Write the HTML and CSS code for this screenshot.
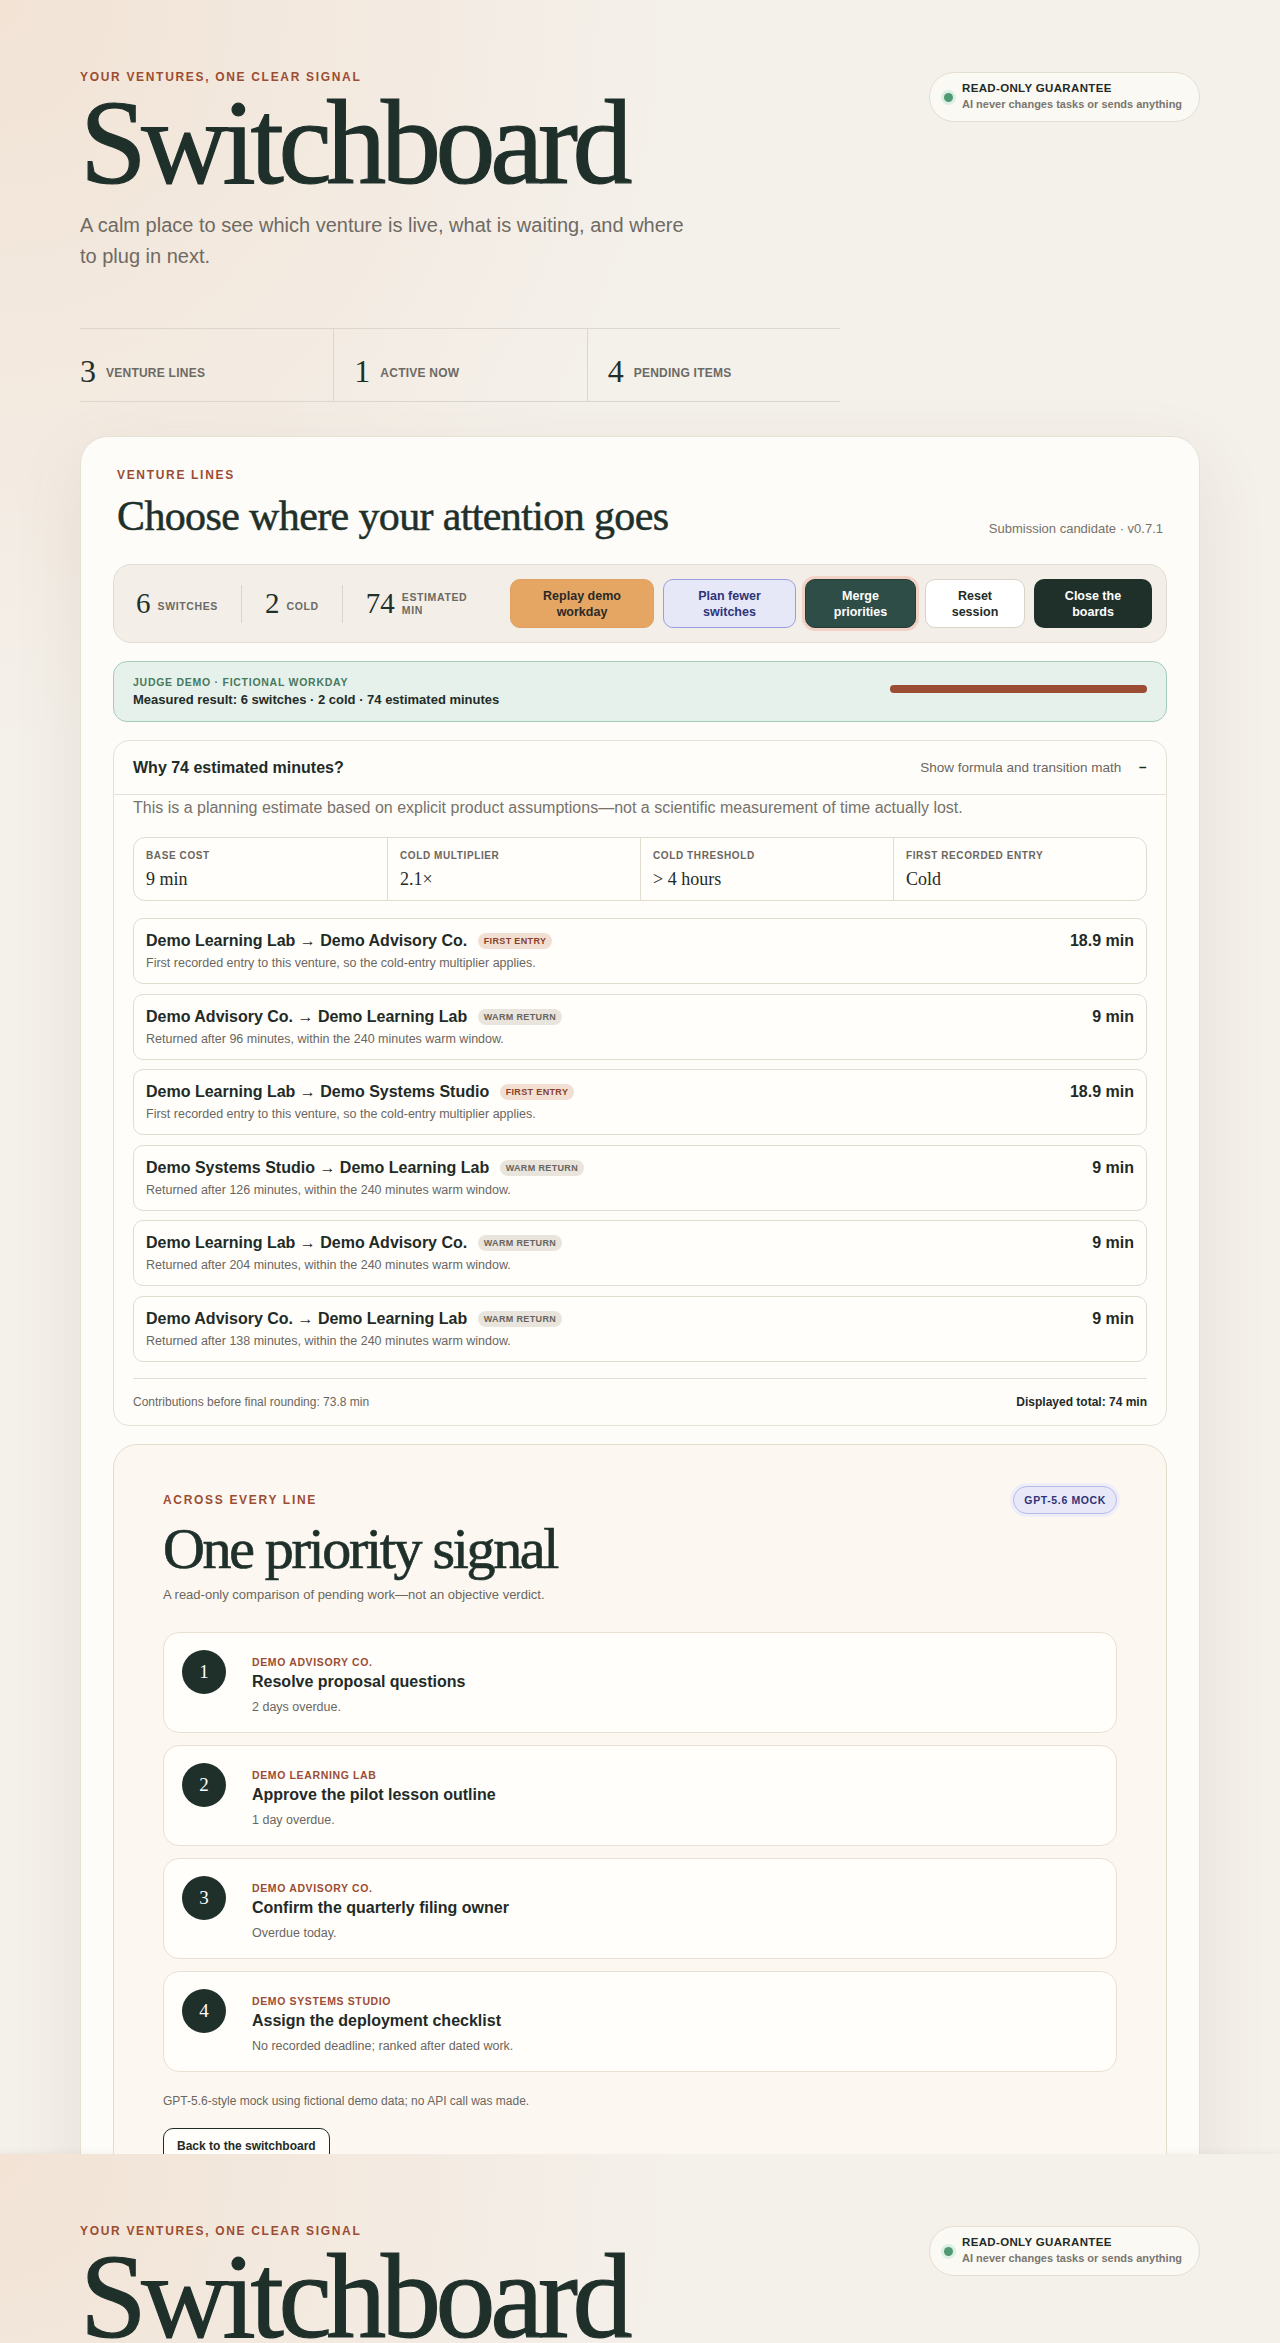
FILE: index.html
```html
<!DOCTYPE html>
<html>
<head>
    <title>Switchboard</title>
    <link rel="stylesheet" href="styles.css">
</head>
<body>
    <div class="frame">
        <div class="page">
            <header class="hero">
                <div class="hero-text">
                    <p class="eyebrow">Your ventures, one clear signal</p>
                    <h1 class="brand">Switchboard</h1>
                    <p class="lede">A calm place to see which venture is live, what is waiting, and where to plug in next.</p>
                    <div class="tally">
                        <div class="tally-item"><span class="tally-num">3</span><span class="tally-label">Venture lines</span></div>
                        <div class="tally-item"><span class="tally-num">1</span><span class="tally-label">Active now</span></div>
                        <div class="tally-item"><span class="tally-num">4</span><span class="tally-label">Pending items</span></div>
                    </div>
                </div>
                <div class="guarantee">
                    <span class="dot"></span>
                    <div>
                        <strong>READ-ONLY GUARANTEE</strong>
                        <span>AI never changes tasks or sends anything</span>
                    </div>
                </div>
            </header>

            <main class="board">
                <section class="lines">
                    <div class="lines-head">
                        <div>
                            <p class="eyebrow">Venture lines</p>
                            <h2 class="section-title">Choose where your attention goes</h2>
                        </div>
                        <span class="version">Submission candidate · v0.7.1</span>
                    </div>

                    <div class="toolbar">
                        <div class="mini-stats">
                            <div class="mini"><span class="mini-num">6</span><span class="mini-label">Switches</span></div>
                            <div class="mini"><span class="mini-num">2</span><span class="mini-label">Cold</span></div>
                            <div class="mini"><span class="mini-num">74</span><span class="mini-label">Estimated min</span></div>
                        </div>
                        <div class="actions">
                            <button class="btn btn-replay">Replay demo<br>workday</button>
                            <button class="btn btn-plan">Plan fewer<br>switches</button>
                            <button class="btn btn-merge">Merge<br>priorities</button>
                            <button class="btn btn-reset">Reset<br>session</button>
                            <button class="btn btn-close">Close the<br>boards</button>
                        </div>
                    </div>

                    <div class="demo-banner">
                        <div>
                            <p class="demo-label">Judge demo · Fictional workday</p>
                            <p class="demo-result">Measured result: 6 switches · 2 cold · 74 estimated minutes</p>
                        </div>
                        <div class="demo-bar"><div class="demo-fill" style="width: 100%"></div></div>
                    </div>

                    <div class="math">
                        <div class="math-head">
                            <h3>Why 74 estimated minutes?</h3>
                            <span class="math-toggle">Show formula and transition math <span class="minus">−</span></span>
                        </div>
                        <div class="math-body">
                            <p class="math-note">This is a planning estimate based on explicit product assumptions—not a scientific measurement of time actually lost.</p>
                            <div class="assumptions">
                                <div class="assumption"><span class="a-label">Base cost</span><span class="a-value">9 min</span></div>
                                <div class="assumption"><span class="a-label">Cold multiplier</span><span class="a-value">2.1×</span></div>
                                <div class="assumption"><span class="a-label">Cold threshold</span><span class="a-value">&gt; 4 hours</span></div>
                                <div class="assumption"><span class="a-label">First recorded entry</span><span class="a-value">Cold</span></div>
                            </div>
                            <div class="transitions">
                                <div class="transition">
                                    <div>
                                        <p class="t-title">Demo Learning Lab → Demo Advisory Co. <span class="tag tag-first">First entry</span></p>
                                        <p class="t-why">First recorded entry to this venture, so the cold-entry multiplier applies.</p>
                                    </div>
                                    <span class="t-cost">18.9 min</span>
                                </div>
                                <div class="transition">
                                    <div>
                                        <p class="t-title">Demo Advisory Co. → Demo Learning Lab <span class="tag tag-warm">Warm return</span></p>
                                        <p class="t-why">Returned after 96 minutes, within the 240 minutes warm window.</p>
                                    </div>
                                    <span class="t-cost">9 min</span>
                                </div>
                                <div class="transition">
                                    <div>
                                        <p class="t-title">Demo Learning Lab → Demo Systems Studio <span class="tag tag-first">First entry</span></p>
                                        <p class="t-why">First recorded entry to this venture, so the cold-entry multiplier applies.</p>
                                    </div>
                                    <span class="t-cost">18.9 min</span>
                                </div>
                                <div class="transition">
                                    <div>
                                        <p class="t-title">Demo Systems Studio → Demo Learning Lab <span class="tag tag-warm">Warm return</span></p>
                                        <p class="t-why">Returned after 126 minutes, within the 240 minutes warm window.</p>
                                    </div>
                                    <span class="t-cost">9 min</span>
                                </div>
                                <div class="transition">
                                    <div>
                                        <p class="t-title">Demo Learning Lab → Demo Advisory Co. <span class="tag tag-warm">Warm return</span></p>
                                        <p class="t-why">Returned after 204 minutes, within the 240 minutes warm window.</p>
                                    </div>
                                    <span class="t-cost">9 min</span>
                                </div>
                                <div class="transition">
                                    <div>
                                        <p class="t-title">Demo Advisory Co. → Demo Learning Lab <span class="tag tag-warm">Warm return</span></p>
                                        <p class="t-why">Returned after 138 minutes, within the 240 minutes warm window.</p>
                                    </div>
                                    <span class="t-cost">9 min</span>
                                </div>
                            </div>
                            <div class="math-foot">
                                <span>Contributions before final rounding: 73.8 min</span>
                                <strong>Displayed total: 74 min</strong>
                            </div>
                        </div>
                    </div>

                    <section class="signal">
                        <div class="signal-head">
                            <div>
                                <p class="eyebrow">Across every line</p>
                                <h2 class="signal-title">One priority signal</h2>
                                <p class="signal-sub">A read-only comparison of pending work—not an objective verdict.</p>
                            </div>
                            <span class="mock-pill">GPT-5.6 MOCK</span>
                        </div>
                        <ol class="priorities">
                            <li class="priority">
                                <span class="rank">1</span>
                                <div class="p-text">
                                    <p class="p-venture">Demo Advisory Co.</p>
                                    <p class="p-task">Resolve proposal questions</p>
                                    <p class="p-why">2 days overdue.</p>
                                </div>
                            </li>
                            <li class="priority">
                                <span class="rank">2</span>
                                <div class="p-text">
                                    <p class="p-venture">Demo Learning Lab</p>
                                    <p class="p-task">Approve the pilot lesson outline</p>
                                    <p class="p-why">1 day overdue.</p>
                                </div>
                            </li>
                            <li class="priority">
                                <span class="rank">3</span>
                                <div class="p-text">
                                    <p class="p-venture">Demo Advisory Co.</p>
                                    <p class="p-task">Confirm the quarterly filing owner</p>
                                    <p class="p-why">Overdue today.</p>
                                </div>
                            </li>
                            <li class="priority">
                                <span class="rank">4</span>
                                <div class="p-text">
                                    <p class="p-venture">Demo Systems Studio</p>
                                    <p class="p-task">Assign the deployment checklist</p>
                                    <p class="p-why">No recorded deadline; ranked after dated work.</p>
                                </div>
                            </li>
                        </ol>
                        <p class="signal-note">GPT-5.6-style mock using fictional demo data; no API call was made.</p>
                        <button class="btn-back">Back to the switchboard</button>
                        <div class="signal-spacer"></div>
                    </section>
                </section>
            </main>
        </div>
    </div>

    <div class="page page-repeat">
        <header class="hero">
            <div class="hero-text">
                <p class="eyebrow">Your ventures, one clear signal</p>
                <h1 class="brand">Switchboard</h1>
            </div>
            <div class="guarantee">
                <span class="dot"></span>
                <div>
                    <strong>READ-ONLY GUARANTEE</strong>
                    <span>AI never changes tasks or sends anything</span>
                </div>
            </div>
        </header>
    </div>
</body>
</html>
```

FILE: styles.css
```css
* {
    box-sizing: border-box;
}

body {
    margin: 0;
    background: #f4f0ea;
    font-family: "Liberation Sans", Arial, sans-serif;
    color: #1f2b27;
}

p,
h1,
h2,
h3,
ol {
    margin: 0;
    padding: 0;
}

.frame {
    height: 2154px;
    overflow: hidden;
}

.page {
    background:
        radial-gradient(900px 1000px at 0 0, #f2e3d5 0%, rgba(244, 240, 234, 0) 75%),
        #f4f0ea;
    padding: 0 80px;
}

.page-repeat {
    height: 189px;
    overflow: hidden;
    box-shadow: 0 -2px 6px rgba(120, 100, 80, 0.06);
}

/* hero */

.hero {
    display: flex;
    justify-content: space-between;
    align-items: flex-start;
    padding-top: 70px;
}

.eyebrow {
    font-size: 12px;
    line-height: 14px;
    font-weight: 700;
    letter-spacing: 0.14em;
    text-transform: uppercase;
    color: #9b4d34;
}

.brand {
    font-family: "Liberation Serif", "Times New Roman", serif;
    font-weight: 400;
    font-size: 120px;
    line-height: 112px;
    letter-spacing: -0.045em;
    color: #1f302b;
    -webkit-text-stroke: 1.2px #1f302b;
    margin-top: 3px;
}

.lede {
    max-width: 615px;
    margin-top: 11px;
    font-size: 20px;
    line-height: 31px;
    color: #6f6a63;
}

.tally {
    display: grid;
    grid-template-columns: repeat(3, 1fr);
    width: 760px;
    margin-top: 56px;
    border-top: 1px solid #ddd6cc;
    border-bottom: 1px solid #ddd6cc;
}

.tally-item {
    display: flex;
    align-items: center;
    gap: 10px;
    padding: 25px 20px 13px;
    border-left: 1px solid #ddd6cc;
}

.tally-item:first-child {
    border-left: none;
    padding-left: 0;
}

.tally-num {
    font-family: "Liberation Serif", serif;
    font-size: 32px;
    line-height: 34px;
    color: #1f302b;
}

.tally-label {
    font-size: 12px;
    font-weight: 700;
    letter-spacing: 0.02em;
    text-transform: uppercase;
    color: #6c6a64;
    margin-top: 3px;
}

.guarantee {
    display: flex;
    align-items: center;
    gap: 9px;
    width: 271px;
    height: 50px;
    margin-top: 2px;
    padding: 0 14px;
    background: #fbf9f4;
    border: 1px solid #e4ddd2;
    border-radius: 25px;
}

.dot {
    flex: none;
    width: 9px;
    height: 9px;
    border-radius: 50%;
    background: #4f9a73;
    box-shadow: 0 0 0 3px #dcefe4;
}

.guarantee strong {
    display: block;
    font-size: 11.5px;
    letter-spacing: 0.03em;
    color: #1f2b27;
}

.guarantee span {
    font-size: 11px;
    font-weight: 700;
    color: #7a766f;
}

/* board */

.board {
    margin-top: 34px;
    width: 1120px;
    background: #fdfcf8;
    border: 1px solid #e7e0d5;
    border-radius: 28px;
    box-shadow: 0 24px 70px rgba(110, 85, 60, 0.10);
}

.lines {
    display: flex;
    flex-direction: column;
    gap: 18px;
    padding: 31px 32px 0;
}

.lines-head {
    display: flex;
    justify-content: space-between;
    align-items: flex-end;
    padding: 0 4px;
    margin-bottom: 6px;
}

.section-title {
    margin-top: 11px;
    font-family: "Liberation Serif", serif;
    font-weight: 400;
    font-size: 42px;
    line-height: 47px;
    letter-spacing: -0.015em;
    color: #1f302b;
    -webkit-text-stroke: 0.5px #1f302b;
}

.version {
    font-size: 13px;
    color: #77726b;
    padding-bottom: 4px;
}

.toolbar {
    display: flex;
    align-items: center;
    justify-content: space-between;
    padding: 14px 14px 14px 22px;
    background: #f3eee7;
    border: 1px solid #e4dcd0;
    border-radius: 18px;
}

.mini-stats {
    display: flex;
    align-items: center;
}

.mini {
    display: flex;
    align-items: center;
    gap: 7px;
    padding: 0 23px;
    border-left: 1px solid #ddd5c9;
    height: 38px;
}

.mini:first-child {
    border-left: none;
    padding-left: 0;
}

.mini-num {
    font-family: "Liberation Serif", serif;
    font-size: 29px;
    color: #1f302b;
}

.mini-label {
    font-size: 10.5px;
    font-weight: 700;
    letter-spacing: 0.06em;
    text-transform: uppercase;
    color: #6c6a64;
    line-height: 13px;
    margin-top: 6px;
}

.mini:last-child .mini-label {
    width: 60px;
    margin-top: 0;
}

.actions {
    display: flex;
    gap: 9px;
}

.btn {
    height: 49px;
    border-radius: 10px;
    font-family: "Liberation Sans", Arial, sans-serif;
    font-size: 12.5px;
    font-weight: 700;
    line-height: 16px;
    border: 1px solid transparent;
}

.btn-replay {
    width: 144px;
    background: #e5a664;
    border-color: #dfa062;
    color: #2a2a25;
}

.btn-plan {
    width: 133px;
    background: #e6e8f8;
    border-color: #9a9ee0;
    color: #2f3478;
}

.btn-merge {
    width: 111px;
    background: #2f4d47;
    border-color: #263c37;
    color: #fff;
    box-shadow: 0 0 0 3px #f2d2c5;
}

.btn-reset {
    width: 100px;
    background: #fff;
    border-color: #d9d2c6;
    color: #1f2b27;
}

.btn-close {
    width: 118px;
    background: #1f302b;
    color: #fff;
}

.demo-banner {
    display: flex;
    justify-content: space-between;
    align-items: center;
    height: 61px;
    padding: 0 19px;
    background: #e6f1eb;
    border: 1px solid #a3cdb8;
    border-radius: 14px;
}

.demo-label {
    font-size: 10.5px;
    font-weight: 700;
    letter-spacing: 0.07em;
    text-transform: uppercase;
    color: #46795d;
}

.demo-result {
    margin-top: 4px;
    font-size: 13px;
    font-weight: 700;
    color: #1f2b27;
}

.demo-bar {
    width: 257px;
    height: 8px;
    border-radius: 4px;
    background: #e0d6cc;
    margin-top: -6px;
}

.demo-fill {
    height: 100%;
    border-radius: 4px;
    background: #9b4d34;
}

/* math panel */

.math {
    background: #fefdfa;
    border: 1px solid #e6e0d6;
    border-radius: 16px;
}

.math-head {
    display: flex;
    justify-content: space-between;
    align-items: center;
    height: 54px;
    padding: 0 19px;
    border-bottom: 1px solid #e6e0d6;
}

.math-head h3 {
    font-size: 16px;
    color: #1f2b27;
}

.math-toggle {
    font-size: 13.5px;
    color: #6b665f;
}

.minus {
    margin-left: 14px;
    font-weight: 700;
    color: #1f2b27;
}

.math-body {
    padding: 2px 19px 16px;
}

.math-note {
    font-size: 16px;
    line-height: 22px;
    color: #77726b;
}

.assumptions {
    display: grid;
    grid-template-columns: repeat(4, 1fr);
    margin-top: 18px;
    background: #fffefb;
    border: 1px solid #e2dcd1;
    border-radius: 12px;
}

.assumption {
    display: flex;
    flex-direction: column;
    gap: 6px;
    padding: 12px 12px 10px;
    border-left: 1px solid #e2dcd1;
}

.assumption:first-child {
    border-left: none;
}

.a-label {
    font-size: 10px;
    line-height: 12px;
    font-weight: 700;
    letter-spacing: 0.06em;
    text-transform: uppercase;
    color: #6b665f;
}

.a-value {
    font-family: "Liberation Serif", serif;
    font-size: 18px;
    line-height: 22px;
    color: #1f2b27;
}

.transitions {
    display: flex;
    flex-direction: column;
    gap: 9.5px;
    margin-top: 17px;
}

.transition {
    display: flex;
    justify-content: space-between;
    align-items: flex-start;
    padding: 12px 12px;
    background: #fffefb;
    border: 1px solid #e2dcd1;
    border-radius: 10px;
}

.t-title {
    font-size: 16px;
    line-height: 20px;
    font-weight: 700;
    color: #1f2b27;
}

.tag {
    display: inline-block;
    margin-left: 6px;
    padding: 0 6px;
    height: 16px;
    line-height: 16px;
    border-radius: 8px;
    font-size: 9px;
    font-weight: 700;
    letter-spacing: 0.04em;
    text-transform: uppercase;
    vertical-align: 2px;
}

.tag-first {
    background: #f2dfd4;
    color: #8a3f28;
}

.tag-warm {
    background: #e9e5dc;
    color: #67645d;
}

.t-why {
    margin-top: 4px;
    font-size: 12.5px;
    line-height: 16px;
    color: #6b665f;
}

.t-cost {
    font-size: 16px;
    line-height: 20px;
    font-weight: 700;
    color: #1f2b27;
}

.math-foot {
    display: flex;
    justify-content: space-between;
    margin-top: 16px;
    padding-top: 16px;
    border-top: 1px solid #e2dcd1;
    font-size: 12px;
    line-height: 14px;
    color: #6b665f;
}

.math-foot strong {
    color: #1f2b27;
}

/* priority signal */

.signal {
    background: #fcf8f1;
    border: 1px solid #e5dccd;
    border-radius: 24px;
    padding: 48px 49px 0;
}

.signal-head {
    display: flex;
    justify-content: space-between;
    align-items: flex-start;
}

.signal-title {
    margin-top: 9px;
    font-family: "Liberation Serif", serif;
    font-weight: 400;
    font-size: 58px;
    line-height: 66px;
    letter-spacing: -0.04em;
    color: #1f302b;
    -webkit-text-stroke: 0.7px #1f302b;
}

.signal-sub {
    margin-top: 4px;
    font-size: 13px;
    line-height: 18px;
    color: #6b665f;
}

.mock-pill {
    margin-top: -7px;
    padding: 7px 10px;
    font-size: 10.5px;
    font-weight: 700;
    letter-spacing: 0.06em;
    color: #2f3478;
    background: #e8e8f8;
    border: 1px solid #b8bbe8;
    border-radius: 14px;
    box-shadow: 0 0 0 3px #efeef8;
}

.priorities {
    list-style: none;
    display: flex;
    flex-direction: column;
    gap: 12px;
    margin-top: 28px;
}

.priority {
    display: flex;
    align-items: flex-start;
    gap: 26px;
    padding: 17px 18px 17px;
    background: #fffefb;
    border: 1px solid #e8e0d3;
    border-radius: 16px;
}

.rank {
    flex: none;
    display: flex;
    align-items: center;
    justify-content: center;
    width: 44px;
    height: 44px;
    border-radius: 50%;
    background: #1f302b;
    color: #fff;
    font-family: "Liberation Serif", serif;
    font-size: 19px;
}

.p-text {
    padding-top: 5px;
}

.p-venture {
    font-size: 10.5px;
    line-height: 14px;
    font-weight: 700;
    letter-spacing: 0.06em;
    text-transform: uppercase;
    color: #9b4d34;
}

.p-task {
    margin-top: 2px;
    font-size: 16px;
    line-height: 22px;
    font-weight: 700;
    color: #1f2b27;
}

.p-why {
    margin-top: 6px;
    font-size: 12.5px;
    line-height: 16px;
    color: #6b665f;
}

.signal-note {
    margin-top: 21px;
    font-size: 12px;
    line-height: 16px;
    color: #6b665f;
}

.btn-back {
    margin-top: 19px;
    height: 36px;
    padding: 0 13px;
    background: #fffefb;
    border: 1px solid #1f2b27;
    border-radius: 10px;
    font-family: "Liberation Sans", Arial, sans-serif;
    font-size: 12px;
    font-weight: 700;
    color: #1f2b27;
}

.signal-spacer {
    height: 60px;
}
```
